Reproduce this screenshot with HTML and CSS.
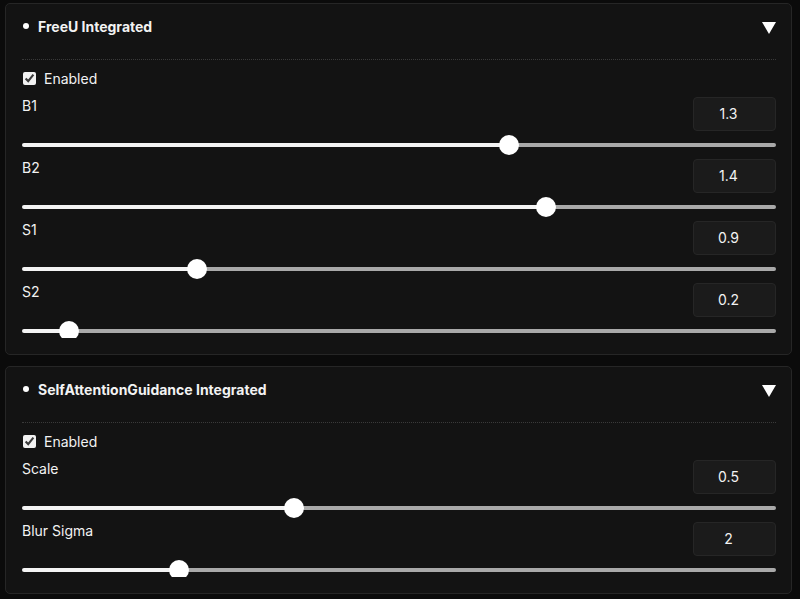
FILE: index.html
```html
<!DOCTYPE html>
<html lang="en">

<head>
  <meta charset="UTF-8">
  <meta name="viewport" content="width=device-width, initial-scale=1.0">
  <title>Integrated Extensions</title>
  <link rel="stylesheet" href="styles.css">
</head>

<body>
  <!-- FreeU -->
  <div class="panel">
    <div class="panel-head">
      <span class="dot"></span>
      <span class="title">FreeU Integrated</span>
      <svg class="caret" width="14" height="12" viewBox="0 0 14 12"><polygon points="0,0 14,0 7,12" fill="#fff"/></svg>
    </div>
    <div class="panel-body">
      <label class="check"><input type="checkbox" checked> Enabled</label>
      <div class="row">
        <div class="row-top"><span class="label">B1</span><div class="value">1.3</div></div>
        <div class="slider-wrap"><input type="range" min="0" max="2" step="0.01" value="1.3"></div>
      </div>
      <div class="row">
        <div class="row-top"><span class="label">B2</span><div class="value">1.4</div></div>
        <div class="slider-wrap"><input type="range" min="0" max="2" step="0.01" value="1.4"></div>
      </div>
      <div class="row">
        <div class="row-top"><span class="label">S1</span><div class="value">0.9</div></div>
        <div class="slider-wrap"><input type="range" min="0" max="4" step="0.01" value="0.9"></div>
      </div>
      <div class="row">
        <div class="row-top"><span class="label">S2</span><div class="value">0.2</div></div>
        <div class="slider-wrap"><input type="range" min="0" max="4" step="0.01" value="0.2"></div>
      </div>
    </div>
  </div>

  <!-- Self attention guidance -->
  <div class="panel">
    <div class="panel-head">
      <span class="dot"></span>
      <span class="title">SelfAttentionGuidance Integrated</span>
      <svg class="caret" width="14" height="12" viewBox="0 0 14 12"><polygon points="0,0 14,0 7,12" fill="#fff"/></svg>
    </div>
    <div class="panel-body">
      <label class="check"><input type="checkbox" checked> Enabled</label>
      <div class="row">
        <div class="row-top"><span class="label">Scale</span><div class="value">0.5</div></div>
        <div class="slider-wrap"><input type="range" min="0" max="1.4" step="0.01" value="0.5"></div>
      </div>
      <div class="row">
        <div class="row-top"><span class="label">Blur Sigma</span><div class="value">2</div></div>
        <div class="slider-wrap"><input type="range" min="0" max="10" step="0.1" value="2"></div>
      </div>
    </div>
  </div>

  <script>
    // paint the filled part of each track up to the thumb centre
    document.querySelectorAll('input[type=range]').forEach(r => {
      const frac = (r.value - r.min) / (r.max - r.min);
      const w = r.offsetWidth;
      const pct = (10 + frac * (w - 20)) / w * 100;
      r.style.setProperty('--fill', pct + '%');
    });
  </script>
</body>

</html>
```

FILE: styles.css
```css
body {
  margin: 0;
  padding: 3px 8px 0 5px;
  background: #0b0b0b;
  color: #f2f2f2;
  font-family: Inter, "Noto Sans", sans-serif;
  font-size: 14px;
}

.panel {
  background: #131313;
  border: 1px solid #262626;
  border-radius: 5px;
  padding: 0 15px 16px 16px;
  margin-bottom: 11px;
}

.panel-head {
  display: flex;
  align-items: center;
  height: 44px;
  padding-bottom: 11px;
  border-bottom: 1px dotted #3a3a3a;
}

.dot {
  width: 6px;
  height: 6px;
  border-radius: 50%;
  background: #fff;
  margin: 0 9px 0 1px;
}

.title {
  font-weight: 700;
  font-size: 14px;
  flex: 1;
}

.caret {
  margin-top: 4px;
}

.panel-body {
  padding-top: 9px;
}

.check {
  display: flex;
  align-items: center;
  height: 18px;
  margin-bottom: 10px;
  font-size: 14px;
}

.check input {
  width: 13px;
  height: 13px;
  margin: 0 8px 0 1px;
  accent-color: #f2f2f2;
}

.row-top {
  display: flex;
  justify-content: space-between;
  align-items: flex-start;
  height: 34px;
}

.label {
  font-size: 14px;
  line-height: 18px;
}

.value {
  width: 69px;
  height: 32px;
  line-height: 32px;
  padding-right: 12px;
  text-align: center;
  background: #1b1b1b;
  border: 1px solid #262626;
  border-radius: 4px;
}

.slider-wrap {
  height: 28px;
  overflow: hidden;
}

.row:last-child .slider-wrap {
  height: 21px;
}

.slider-wrap input {
  -webkit-appearance: none;
  appearance: none;
  display: block;
  width: 100%;
  height: 20px;
  margin: 4px 0 0;
  background: transparent;
}

.slider-wrap input::-webkit-slider-runnable-track {
  height: 4px;
  border-radius: 2px;
  background: linear-gradient(to right, #f4f4f4 var(--fill), #a9a9a9 var(--fill));
}

.slider-wrap input::-webkit-slider-thumb {
  -webkit-appearance: none;
  width: 20px;
  height: 20px;
  margin-top: -8px;
  border-radius: 50%;
  background: #fff;
}
```
